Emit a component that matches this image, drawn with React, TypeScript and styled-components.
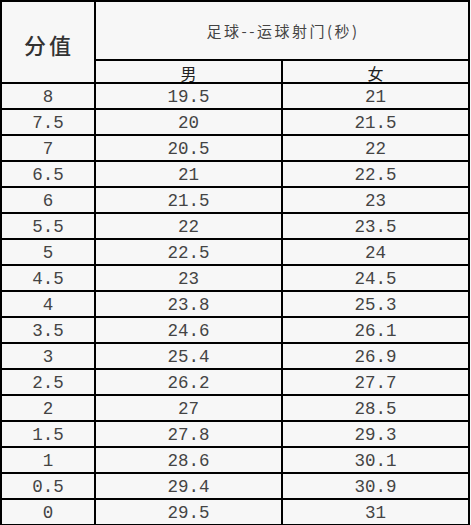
import { Fragment } from 'react';
import styled, { createGlobalStyle } from 'styled-components';

const GlobalStyle = createGlobalStyle`
  html, body {
    margin: 0;
    padding: 0;
    background: #f7f7f7;
  }
`;

const rows: [string, string, string][] = [
  ['8', '19.5', '21'],
  ['7.5', '20', '21.5'],
  ['7', '20.5', '22'],
  ['6.5', '21', '22.5'],
  ['6', '21.5', '23'],
  ['5.5', '22', '23.5'],
  ['5', '22.5', '24'],
  ['4.5', '23', '24.5'],
  ['4', '23.8', '25.3'],
  ['3.5', '24.6', '26.1'],
  ['3', '25.4', '26.9'],
  ['2.5', '26.2', '27.7'],
  ['2', '27', '28.5'],
  ['1.5', '27.8', '29.3'],
  ['1', '28.6', '30.1'],
  ['0.5', '29.4', '30.9'],
  ['0', '29.5', '31'],
];

// black background + 2px gaps draw the grid lines
const ScoreTable = styled.div`
  display: grid;
  width: 470px;
  box-sizing: border-box;
  grid-template-columns: 92px 185px 185px;
  grid-template-rows: 57px 21px repeat(17, 24px);
  gap: 2px;
  padding: 2px;
  background: #000;
`;

const Cell = styled.div`
  background: #f7f7f7;
  display: flex;
  align-items: center;
  justify-content: center;
  color: #3a3a3a;
`;

const ScoreHead = styled(Cell)`
  grid-row: span 2;
  font-family: 'Noto Sans CJK SC', sans-serif;
  font-size: 22px;
  font-weight: 500;
  letter-spacing: 3px;
  color: #333;
  padding-top: 4px;
  padding-left: 2px;
`;

const TitleHead = styled(Cell)`
  grid-column: span 2;
  font-family: 'Noto Sans CJK SC', sans-serif;
  font-size: 15px;
  letter-spacing: 2.5px;
  color: #444;
  padding-left: 2px;
`;

const SexHead = styled(Cell)`
  font-family: 'Noto Sans CJK SC', sans-serif;
  font-size: 16px;
  color: #222;
  padding-top: 2px;
`;

const Num = styled(Cell)`
  font-family: 'Liberation Mono', monospace;
  font-size: 17.5px;
  color: #444;
  padding-top: 2px;
`;

export default function App() {
  return (
    <>
      <GlobalStyle />
      <ScoreTable>
        <ScoreHead>分值</ScoreHead>
        <TitleHead>足球--运球射门(秒)</TitleHead>
        <SexHead>男</SexHead>
        <SexHead>女</SexHead>
        {rows.map(([score, male, female]) => (
          <Fragment key={score}>
            <Num>{score}</Num>
            <Num>{male}</Num>
            <Num>{female}</Num>
          </Fragment>
        ))}
      </ScoreTable>
    </>
  );
}
